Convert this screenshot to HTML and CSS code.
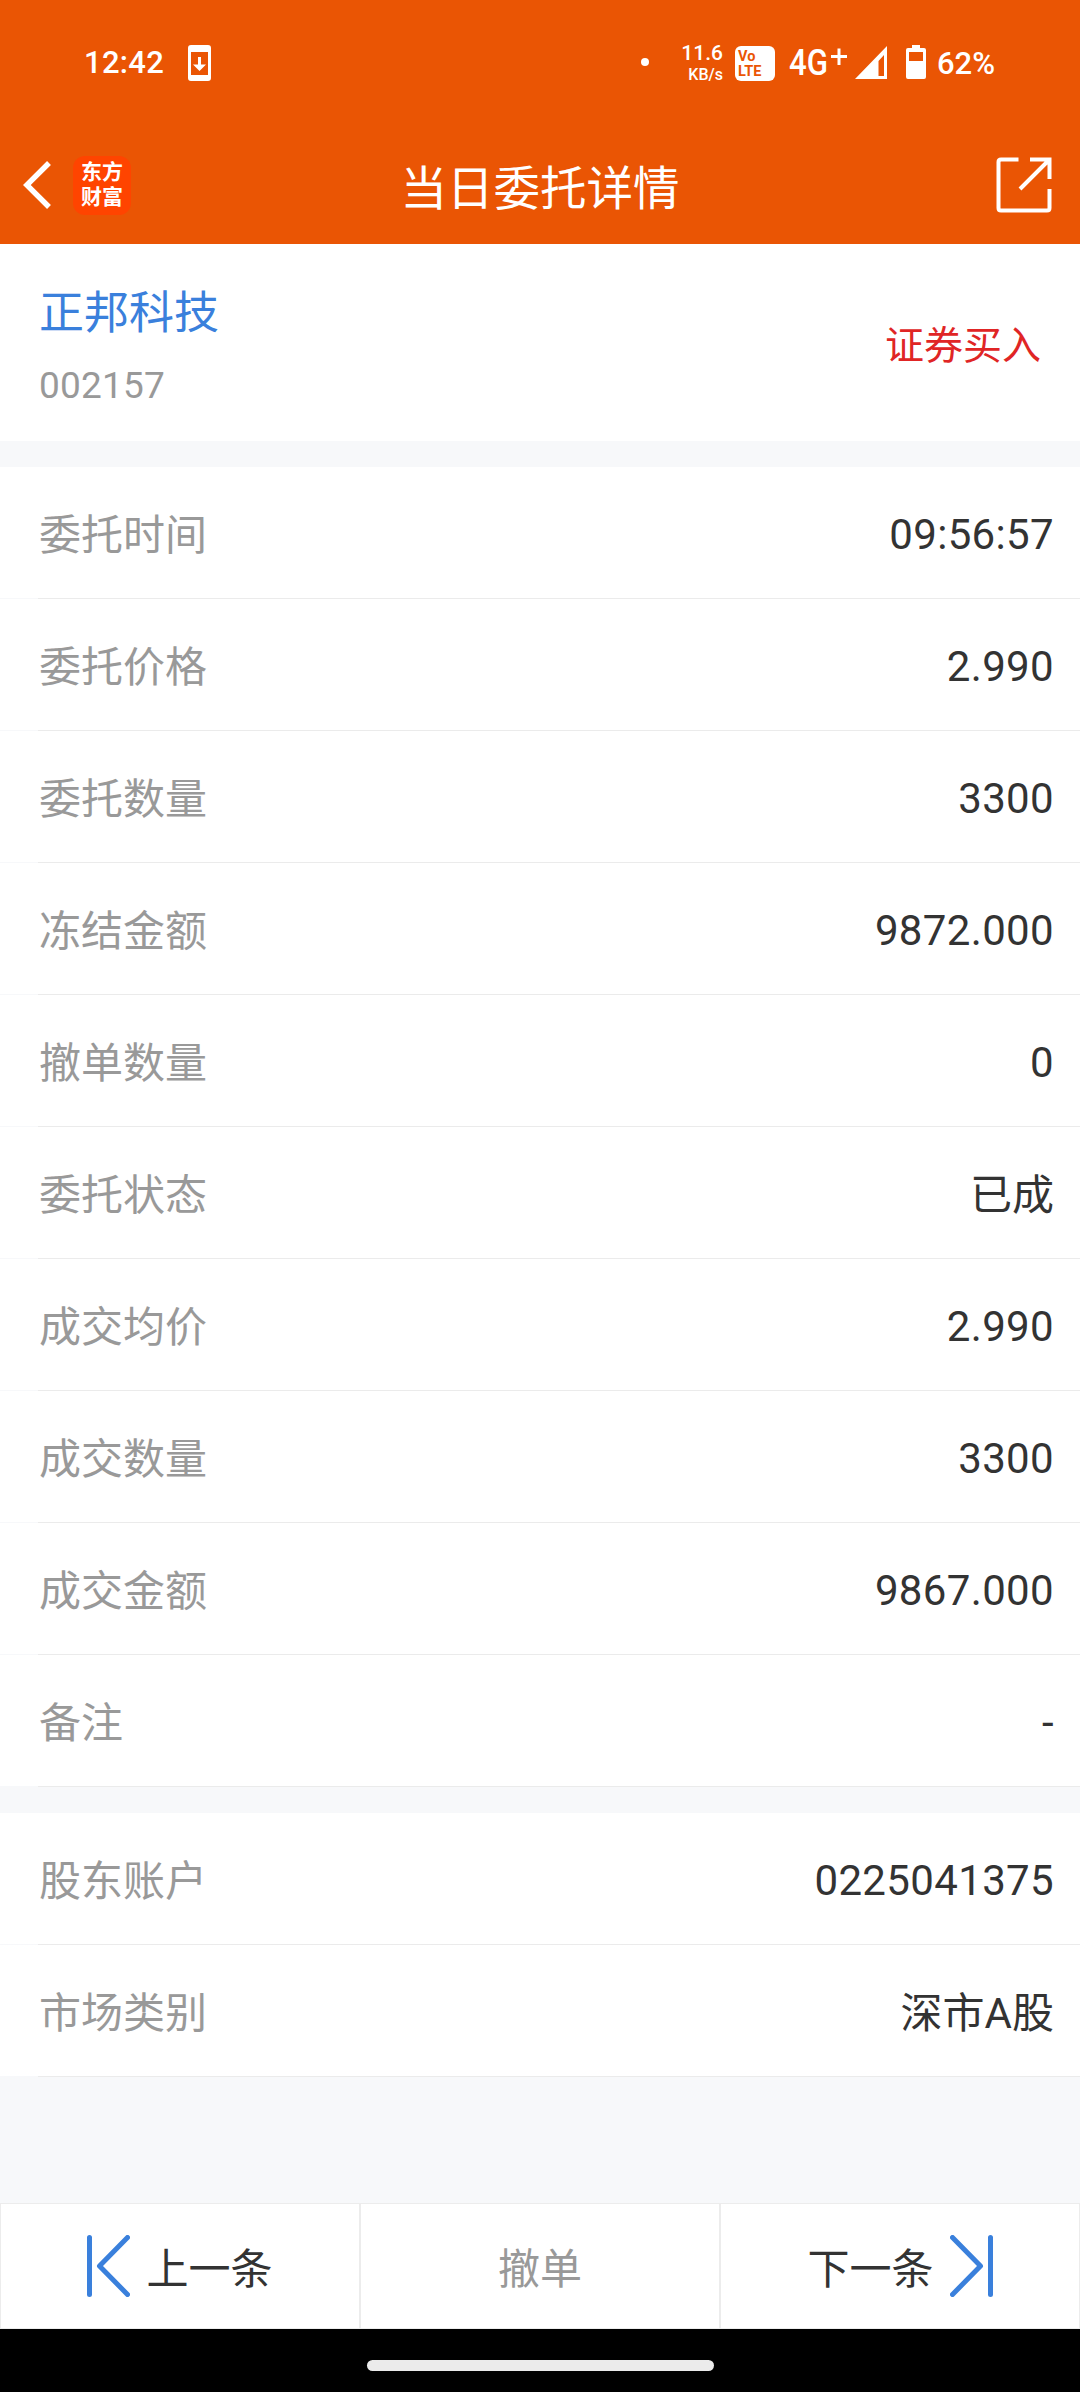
FILE: index.html
```
<!DOCTYPE html>
<html lang="zh-CN">
<head>
    <meta charset="UTF-8">
    <meta name="viewport" content="width=device-width, initial-scale=1.0">
    <title>当日委托详情</title>
    <link rel="stylesheet" href="styles.css">
</head>
<body>
    <header class="header">
        <div class="status-bar">
            <span class="time">12:42</span>
            <svg class="phone-icon" width="23" height="36" viewBox="0 0 23 36">
                <path fill="#fff" fill-rule="evenodd" d="M3 0H20Q23 0 23 3V33Q23 36 20 36H3Q0 36 0 33V3Q0 0 3 0ZM3 7V30H20V7Z"/>
                <path fill="#fff" d="M10 12H13V19.500H18L11.500 26L5 19.500H10Z"/>
            </svg>
            <span class="dot"></span>
            <div class="speed">
                <span class="speed-value">11.6</span>
                <span class="speed-unit">KB/s</span>
            </div>
            <div class="volte">
                <span>Vo</span>
                <span>LTE</span>
            </div>
            <svg class="network" width="60" height="52" viewBox="0 -8 60 52">
                <text x="1" y="30" textLength="39" lengthAdjust="spacingAndGlyphs">4G</text>
                <path d="M43 11.500H59M51 3.500V20" stroke="#fff" stroke-width="3" fill="none"/>
            </svg>
            <svg class="signal" width="32" height="33" viewBox="0 0 32 33">
                <path fill="#fff" fill-rule="evenodd" d="M32 0V33H0ZM29 9L23.500 15V30H29Z"/>
            </svg>
            <svg class="battery" width="20" height="34" viewBox="0 0 20 34">
                <path fill="#fff" fill-rule="evenodd" d="M6 0H14V3H18Q20 3 20 5V32Q20 34 18 34H2Q0 34 0 32V5Q0 3 2 3H6ZM3 7V16H17V7Z"/>
            </svg>
            <span class="percent">62%</span>
        </div>
        <div class="nav">
            <div class="nav-left">
                <svg width="28" height="48" viewBox="0 0 28 48">
                    <path d="M26 2L3.800 24L26 46" fill="none" stroke="#fff" stroke-width="5.500"/>
                </svg>
                <div class="logo">
                    <span>东方</span>
                    <span>财富</span>
                </div>
            </div>
            <h1 class="title">当日委托详情</h1>
            <svg class="share" width="56" height="56" viewBox="0 0 56 56">
                <g fill="none" stroke="#fff" stroke-width="4">
                    <path d="M22.500 2.500H5Q2.500 2.500 2.500 5V51Q2.500 53.500 5 53.500H51Q53.500 53.500 53.500 51V32"/>
                    <path d="M34 2.500H53.500V22M53 3L24 32"/>
                </g>
            </svg>
        </div>
    </header>

    <section class="stock">
        <div>
            <div class="stock-name">正邦科技</div>
            <div class="stock-code">002157</div>
        </div>
        <div class="trade-type">证券买入</div>
    </section>

    <section class="list">
        <div class="row"><span class="label">委托时间</span><span class="value">09:56:57</span></div>
        <div class="row"><span class="label">委托价格</span><span class="value">2.990</span></div>
        <div class="row"><span class="label">委托数量</span><span class="value">3300</span></div>
        <div class="row"><span class="label">冻结金额</span><span class="value">9872.000</span></div>
        <div class="row"><span class="label">撤单数量</span><span class="value">0</span></div>
        <div class="row"><span class="label">委托状态</span><span class="value cn">已成</span></div>
        <div class="row"><span class="label">成交均价</span><span class="value">2.990</span></div>
        <div class="row"><span class="label">成交数量</span><span class="value">3300</span></div>
        <div class="row"><span class="label">成交金额</span><span class="value">9867.000</span></div>
        <div class="row"><span class="label">备注</span><span class="value">-</span></div>
    </section>

    <section class="list">
        <div class="row"><span class="label">股东账户</span><span class="value">0225041375</span></div>
        <div class="row"><span class="label">市场类别</span><span class="value cn">深市A股</span></div>
    </section>

    <footer class="actions">
        <div class="action">
            <svg width="43" height="62" viewBox="0 0 43 62">
                <path d="M2.500 2.500V59.500M40.500 2.500L12.500 31L40.500 59.500"/>
            </svg>
            <span>上一条</span>
        </div>
        <div class="action disabled"><span>撤单</span></div>
        <div class="action">
            <span>下一条</span>
            <svg width="43" height="62" viewBox="0 0 43 62">
                <path d="M40.500 2.500V59.500M2.500 2.500L30.500 31L2.500 59.500"/>
            </svg>
        </div>
    </footer>
    <div class="home-bar"><div class="home-pill"></div></div>
</body>
</html>
```
FILE: styles.css
```
* {
    box-sizing: border-box;
}

body {
    margin: 0;
    width: 1080px;
    height: 2392px;
    display: flex;
    flex-direction: column;
    background-color: #f7f8fa;
    color: #333;
    font-family: Roboto, "Noto Sans CJK SC", sans-serif;
    font-size: 42px;
}

svg {
    display: block;
    flex: none;
}

.header {
    height: 244px;
    background-color: #ea5504;
    color: #fff;
}

/* phone status bar */
.status-bar {
    display: flex;
    align-items: center;
    height: 124px;
    padding: 0 0 0 84px;
    line-height: 36px;
}

.time {
    width: 104px;
    padding-top: 1px;
    font-size: 31px;
    font-weight: 500;
    letter-spacing: 0.3px;
}

.phone-icon {
    margin-top: 2px;
}

.dot {
    width: 8px;
    height: 8px;
    margin-left: 430px;
    border-radius: 50%;
    background-color: #fff;
}

.speed {
    display: flex;
    flex-direction: column;
    width: 60px;
    margin-left: 14px;
    padding-top: 3px;
    text-align: right;
    font-weight: 500;
}

.speed-value {
    font-size: 21px;
    line-height: 21px;
}

.speed-unit {
    font-size: 16px;
    line-height: 21px;
}

.volte {
    display: flex;
    flex-direction: column;
    width: 40px;
    height: 35px;
    margin-top: 2px;
    margin-left: 12px;
    padding: 3px 0 0 3px;
    border-radius: 6px;
    background-color: #fff;
    color: #ea5504;
    font-size: 14.5px;
    font-weight: 700;
    line-height: 15px;
}

.network {
    margin-left: 13px;
    margin-top: 2px;
}

.network text {
    fill: #fff;
    font-size: 36px;
    font-weight: 500;
}

.signal {
    margin-left: 7px;
}

.battery {
    margin-left: 19px;
}

.percent {
    margin-left: 11px;
    padding-top: 4px;
    font-size: 31px;
    font-weight: 500;
}

/* title bar */
.nav {
    display: grid;
    grid-template-columns: 1fr auto 1fr;
    align-items: center;
    height: 120px;
    padding: 2px 28px 0 23px;
}

.nav-left {
    display: flex;
    align-items: center;
    gap: 22px;
}

.logo {
    display: flex;
    flex-direction: column;
    align-items: center;
    width: 58px;
    height: 59px;
    padding-top: 2px;
    border-radius: 12px;
    background-color: #ff4400;
    font-family: "Noto Sans CJK SC", sans-serif;
    font-size: 21px;
    font-weight: 700;
    line-height: 25px;
}

.title {
    margin: 0;
    padding: 8px 0 0 5px;
    font-size: 46.5px;
    font-weight: 400;
    line-height: 60px;
}

.share {
    justify-self: end;
}

/* stock summary */
.stock {
    display: flex;
    justify-content: space-between;
    height: 197px;
    padding: 40px 39px 0;
    background-color: #fff;
}

.stock-name {
    color: #3a80dc;
    font-size: 45px;
    line-height: 60px;
}

.stock-code {
    margin-top: 17px;
    color: #999;
    font-size: 37px;
    line-height: 50px;
    letter-spacing: 0.2px;
}

.trade-type {
    padding-top: 35px;
    color: #e02525;
    font-size: 39px;
    line-height: 54px;
}

/* detail rows */
.list {
    margin-top: 26px;
    background-color: #fff;
}

.row {
    display: flex;
    align-items: center;
    justify-content: space-between;
    height: 132px;
    padding: 0 26px 0 39px;
    border-bottom: 1px solid #f7f8fa;
    border-image: linear-gradient(to right, #f7f8fa 39px, #ebebeb 39px) 1;
    border-width: 0 0 1px;
    line-height: 60px;
}

.label {
    padding-top: 6px;
    color: #999;
}

.value {
    padding-top: 4px;
    letter-spacing: 0.35px;
}

.value.cn {
    padding-top: 6px;
    letter-spacing: 0;
}

/* bottom buttons */
.actions {
    display: grid;
    grid-template-columns: repeat(3, 1fr);
    height: 126px;
    margin-top: auto;
}

.action {
    display: flex;
    align-items: center;
    justify-content: center;
    gap: 16px;
    border: 1px solid #ececec;
    background-color: #fff;
    line-height: 60px;
}

.action span {
    padding-top: 7px;
}

.action path {
    fill: none;
    stroke: #3a80dc;
    stroke-width: 5;
    stroke-linecap: round;
    stroke-linejoin: round;
}

.disabled {
    color: #999;
}

.home-bar {
    height: 63px;
    padding-top: 31px;
    background-color: #000;
}

.home-pill {
    width: 347px;
    height: 11px;
    margin: 0 auto;
    border-radius: 6px;
    background-color: #ebebeb;
}
```
